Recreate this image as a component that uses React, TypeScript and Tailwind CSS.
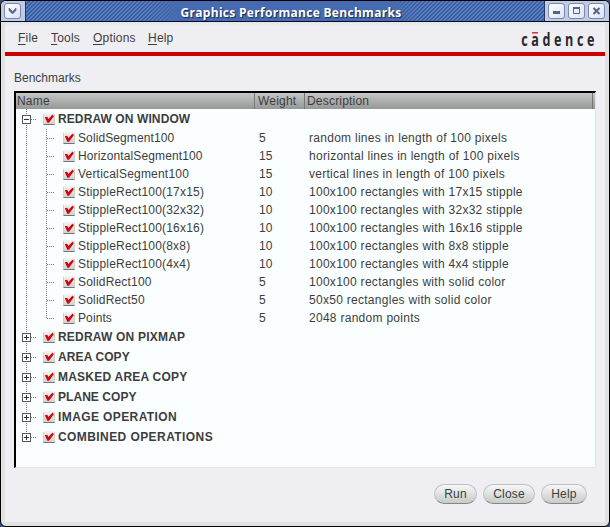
import React from "react";

const children = [
  ["SolidSegment100", "5", "random lines in length of 100 pixels", "tracking-[0.1px]"],
  ["HorizontalSegment100", "15", "horizontal lines in length of 100 pixels", "tracking-[0.13px]"],
  ["VerticalSegment100", "15", "vertical lines in length of 100 pixels", "tracking-[0.2px]"],
  ["StippleRect100(17x15)", "10", "100x100 rectangles with 17x15 stipple", "tracking-[0.19px]"],
  ["StippleRect100(32x32)", "10", "100x100 rectangles with 32x32 stipple", "tracking-[0.19px]"],
  ["StippleRect100(16x16)", "10", "100x100 rectangles with 16x16 stipple", "tracking-[0.19px]"],
  ["StippleRect100(8x8)", "10", "100x100 rectangles with 8x8 stipple", "tracking-[0.19px]"],
  ["StippleRect100(4x4)", "10", "100x100 rectangles with 4x4 stipple", "tracking-[0.19px]"],
  ["SolidRect100", "5", "100x100 rectangles with solid color", "tracking-[0.19px]"],
  ["SolidRect50", "5", "50x50 rectangles with solid color", "tracking-[0.19px]"],
  ["Points", "5", "2048 random points", "tracking-[0.1px]"],
];

const groups = [
  ["REDRAW ON PIXMAP", "tracking-[0.2px]"],
  ["AREA COPY", "tracking-[0.1px]"],
  ["MASKED AREA COPY", "tracking-[0.23px]"],
  ["PLANE COPY", "tracking-[0.05px]"],
  ["IMAGE OPERATION", "tracking-[0.4px]"],
  ["COMBINED OPERATIONS", "tracking-[0.42px]"],
];

function Check() {
  return (
    <svg className="block shrink-0" width="12" height="12" viewBox="0 0 12 12">
      <defs>
        <linearGradient id="box" x1="0" y1="0" x2="0" y2="1">
          <stop offset="0" stopColor="#f4f4f4" />
          <stop offset="1" stopColor="#cfcfd1" />
        </linearGradient>
      </defs>
      <rect width="12" height="12" rx="1" fill="url(#box)" />
      <path d="M0.5 1V11M11.5 1V11" stroke="#d0d2d2" />
      <path d="M0.5 11.5H11.5" stroke="#747476" />
      <path d="M1.8 4.2L4.2 3.8L5.4 6L9.6 1.4L10.8 3.2L6 9.8H4.4Z" fill="#d2040c" />
    </svg>
  );
}

function Expander({ open, last }: { open?: boolean; last?: boolean }) {
  return (
    <svg className="block shrink-0" width="27" height="20" viewBox="0 0 27 20" shapeRendering="crispEdges">
      <path d={last ? "M10.5 0V6" : "M10.5 0V20"} stroke="#77797a" strokeDasharray="1 1" />
      <path d="M15 10.5H20" stroke="#77797a" strokeDasharray="1 1" />
      <rect x="6.5" y="6.5" width="8" height="8" fill="#fafefe" stroke="#55575a" />
      <path d="M8 10.5H13" stroke="#333" />
      {!open && <path d="M10.5 8V13" stroke="#333" />}
    </svg>
  );
}

function Branch({ last }: { last?: boolean }) {
  return (
    <svg className="block shrink-0" width="47" height="18" viewBox="0 0 47 18" shapeRendering="crispEdges">
      <path d="M10.5 0V18" stroke="#77797a" strokeDasharray="1 1" />
      <path d={last ? "M30.5 0V10" : "M30.5 0V18"} stroke="#77797a" strokeDasharray="1 1" />
      <path d="M31 9.5H39" stroke="#77797a" strokeDasharray="1 1" />
    </svg>
  );
}

function Group({ name, tracking, open, last }: { name: string; tracking: string; open?: boolean; last?: boolean }) {
  return (
    <div className="flex h-5 items-center">
      <Expander open={open} last={last} />
      <Check />
      <span className={"ml-[3px] text-[12px] leading-5 font-bold " + tracking}>{name}</span>
    </div>
  );
}

function TitleButton({ children }: { children: React.ReactNode }) {
  return (
    <div className="h-4 w-[17px] rounded-[3px] border border-[#7888b0] bg-linear-to-br from-white to-[#dce2f2]">
      <svg className="block" width="15" height="14" viewBox="0 0 15 14">
        {children}
      </svg>
    </div>
  );
}

function PushButton({ label, width }: { label: string; width: string }) {
  return (
    <button
      className={
        width +
        " h-5 rounded-full border border-[#bfc1c1] border-b-[#858787] bg-linear-to-b from-[#f7f7f7] to-[#c8cbc9] text-center text-[12px] leading-[18px] tracking-[0.2px]"
      }
    >
      {label}
    </button>
  );
}

export default function App() {
  return (
    <div className="h-[527px] w-[610px] overflow-hidden bg-[#3a4a70] font-['Liberation_Sans',Arial,sans-serif] text-[#3d3d40]">
      <div className="flex h-[527px] w-[610px] flex-col overflow-hidden rounded-[6px] border border-black bg-[#dfe2e0]">
        <header className="flex h-[21px] shrink-0 border-b border-[#080c20] bg-[#c0cce4]">
          <div className="flex w-6 pt-[2px] pl-[3px]">
            <TitleButton>
              <path d="M4 4L7.5 7.5L11 4V6.5L7.5 10L4 6.5Z" fill="#53658f" stroke="#53658f" strokeWidth="0.6" />
            </TitleButton>
          </div>
          <div className="flex flex-1 items-center justify-center border-x border-[#253863] bg-[repeating-linear-gradient(135deg,#5a80c4_0_1.7px,#3b5ba0_1.7px_2.83px)]">
            <div className="h-full w-[270px] bg-[linear-gradient(90deg,#476bb000,#476bb0_10%,#476bb0_90%,#476bb000)] pt-px pl-[12px] text-center text-[12px] leading-[21px] font-bold whitespace-nowrap text-white [text-shadow:1px_1px_1px_#182850]">
              <span className="font-['Open_Sans','Noto_Sans',sans-serif] tracking-[0.3px]">Graphics Performance Benchmarks</span>
            </div>
          </div>
          <div className="flex w-[64px] gap-[3px] pt-[2px] pl-[3px]">
            <TitleButton><path d="M4 7H11V10H4Z" fill="#53658f" /></TitleButton>
            <TitleButton><path d="M4.5 3.5H10.5V9.5H4.5Z" fill="none" stroke="#53658f" /><path d="M4 3H11V5H4Z" fill="#53658f" /></TitleButton>
            <TitleButton><path d="M4.5 4L10.5 10M10.5 4L4.5 10" stroke="#53658f" strokeWidth="2" /></TitleButton>
          </div>
        </header>

        <main className="mr-1 mb-1 ml-1 flex min-h-0 flex-1 flex-col bg-[#efeff3]">
          <div className="flex h-[30px] shrink-0 bg-linear-to-b from-[#e4e6e6] to-[#efeff3] to-15% pl-[13px] text-[12px] leading-8">
            <nav className="flex flex-1 tracking-[0.2px]">
              <span className="w-[33px]"><u className="underline-offset-2">F</u>ile</span>
              <span className="w-[42px]"><u className="underline-offset-2">T</u>ools</span>
              <span className="w-[55px]"><u className="underline-offset-2">O</u>ptions</span>
              <span><u className="underline-offset-2">H</u>elp</span>
            </nav>
            <svg className="mr-[6px] block" width="80" height="30" viewBox="0 0 80 30">
              <text
                transform="translate(2.2 24) scale(0.74 1)"
                fontSize="17"
                fontWeight="700"
                fontFamily="Open Sans, Noto Sans, sans-serif"
                textLength="99"
                lengthAdjust="spacing"
                fill="#29282b"
              >
                cadence
              </text>
              <path d="M13 10.8H19" stroke="#dc3038" strokeWidth="1.6" />
            </svg>
          </div>
          <div className="h-1 shrink-0 bg-[#cc0000]" />
          <div className="h-[35px] shrink-0 pt-3 pl-[9px] text-[12px] leading-5">Benchmarks</div>

          <section className="ml-[9px] h-[377px] w-[582px] shrink-0 border-t-2 border-r border-b border-l-2 border-t-black border-r-[#e2e5e5] border-b-[#e2e5e5] border-l-black bg-[#fafefe]">
            <div className="flex h-4 bg-linear-to-b from-[#c3c7c6] to-[#969896] text-[12px] leading-[17px] tracking-[0.2px]">
              <span className="h-4 w-[239px] border-r border-[#757775] pl-px">Name</span>
              <span className="h-4 w-[50px] border-r border-[#757775] pl-[3px]">Weight</span>
              <span className="h-4 w-[288px] border-r border-[#757775] pl-[2px]">Description</span>
            </div>
            <Group name="REDRAW ON WINDOW" tracking="tracking-[0.1px]" open />
            {children.map(([name, weight, text, tracking], i) => (
              <div key={name} className="flex h-[18px] items-center text-[12px] leading-[18px]">
                <Branch last={i === children.length - 1} />
                <Check />
                <span className={"w-[184px] pl-[3px] " + tracking}>{name}</span>
                <span className="w-[50px] tracking-[0.2px]">{weight}</span>
                <span className="tracking-[0.28px]">{text}</span>
              </div>
            ))}
            {groups.map(([name, tracking], i) => (
              <Group key={name} name={name} tracking={tracking} last={i === groups.length - 1} />
            ))}
          </section>

          <footer className="flex gap-[6px] pt-4 pl-[429px]">
            <PushButton label="Run" width="w-[43px]" />
            <PushButton label="Close" width="w-[52px]" />
            <PushButton label="Help" width="w-[46px]" />
          </footer>
        </main>
      </div>
    </div>
  );
}
